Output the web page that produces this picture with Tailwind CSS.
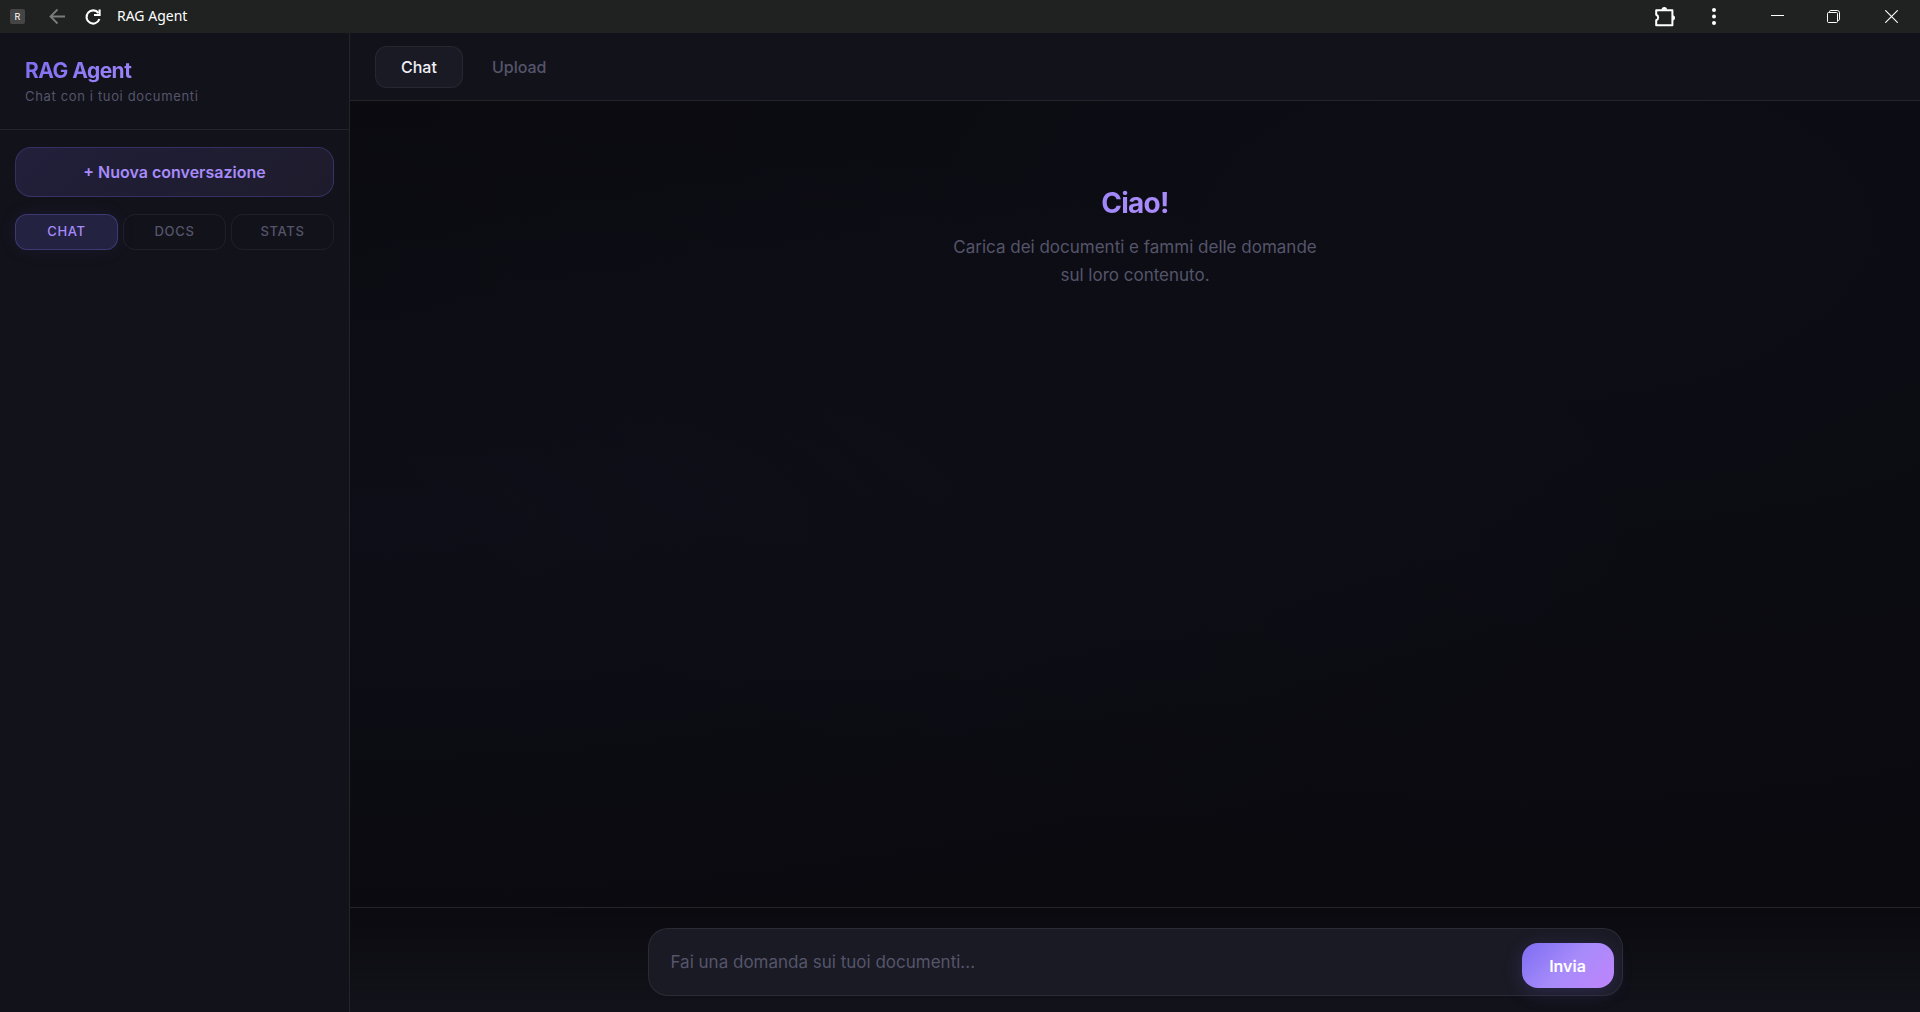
<!DOCTYPE html>
<html lang="it">
  <head>
    <meta charset="UTF-8" />
    <meta name="viewport" content="width=device-width, initial-scale=1.0" />
    <title>RAG Agent</title>
    <script src="https://cdn.jsdelivr.net/npm/@tailwindcss/browser@4"></script>
  </head>
  <body class="h-screen flex flex-col overflow-hidden bg-[#0a0a0f] font-['Inter',sans-serif] text-[#f0f0f5]">
    <!-- Barra del titolo -->
    <header class="flex shrink-0 items-center h-[33px] bg-[#202221] pl-[10px] text-white">
      <span class="flex items-center justify-center w-[15px] h-[15px] rounded-xs bg-[#454545] text-[9px] text-white">R</span>
      <button type="button" aria-label="Indietro" class="ml-6 text-[#7b7b7b]">
        <svg class="w-[17px] h-[17px]" viewBox="0 0 17 17" fill="none" stroke="currentColor" stroke-width="1.8"><path d="M16 8.5H2M8.5 1.5l-7 7 7 7" /></svg>
      </button>
      <button type="button" aria-label="Ricarica" class="ml-[18px]">
        <svg class="w-[18px] h-[18px]" viewBox="0 0 18 18" fill="none" stroke="currentColor" stroke-width="2.1"><path d="M14.4 5A6.6 6.6 0 1 0 15.4 11" /><path d="M15.6 1.4V7H10" /></svg>
      </button>
      <span class="ml-[15px] pb-px font-['Noto_Sans',sans-serif] text-sm">RAG Agent</span>
      <div class="ml-auto flex items-center">
        <button type="button" aria-label="Estensioni" class="mr-9">
          <svg class="w-[22px] h-[22px]" viewBox="0 0 22 22"><path d="M2.2 4.2H18.4V19.3H2.2v-5.1a2.9 2.9 0 0 0 0-5.5z" fill="none" stroke="currentColor" stroke-width="2" stroke-linejoin="round" /><path d="M7.6 3.8a2.7 2.7 0 0 1 5.4 0zM18.4 9.2a2.6 2.6 0 0 1 0 5.2z" fill="currentColor" /></svg>
        </button>
        <button type="button" aria-label="Menu" class="mr-[55px]">
          <svg class="w-1 h-[17px]" viewBox="0 0 4 17" fill="currentColor"><circle cx="2" cy="2" r="2" /><circle cx="2" cy="8.5" r="2" /><circle cx="2" cy="15" r="2" /></svg>
        </button>
        <button type="button" aria-label="Riduci a icona" class="mr-[43px]">
          <svg class="w-[13px] h-[13px]" viewBox="0 0 13 13"><path d="M0 5.5h13" stroke="currentColor" /></svg>
        </button>
        <button type="button" aria-label="Ripristina" class="mr-[45px]">
          <svg class="w-[13px] h-[13px]" viewBox="0 0 13 13" fill="none" stroke="currentColor"><rect x=".5" y="2.5" width="10" height="10" rx="1" /><path d="M2.5 2.5V1.8Q2.5.5 3.8.5h6.4q2.3 0 2.3 2.3v6.4q0 1.3-1.3 1.3h-.7" /></svg>
        </button>
        <button type="button" aria-label="Chiudi" class="mr-[22px]">
          <svg class="w-[13px] h-[13px]" viewBox="0 0 13 13" fill="none" stroke="currentColor" stroke-width="1.1"><path d="M.3.3l12.4 12.4M12.7.3L.3 12.7" /></svg>
        </button>
      </div>
    </header>

    <div class="flex flex-1 min-h-0 bg-[radial-gradient(ellipse_at_20%_50%,rgba(124,109,242,0.04),transparent_60%),radial-gradient(ellipse_at_80%_20%,rgba(124,109,242,0.03),transparent_60%)]">
      <!-- Sidebar -->
      <aside class="flex flex-col shrink-0 w-[350px] border-r border-white/8 bg-[#12121a]">
        <div class="px-[25px] py-[23px] border-b border-white/8">
          <h1 class="bg-[linear-gradient(135deg,#7c6df2_0%,#a78bfa_50%,#c084fc_100%)] bg-clip-text text-transparent text-[21px] leading-[30px] font-bold tracking-tight">RAG Agent</h1>
          <p class="text-[13px] leading-5 tracking-wider text-[#55556a]">Chat con i tuoi documenti</p>
        </div>
        <button type="button" class="mx-[15px] mt-[17px] h-[50px] rounded-2xl border border-[#7c6df2]/25 bg-linear-135 from-[#7c6df2]/15 to-[#a78bfa]/8 text-base font-semibold text-[#a78bfa]">+ Nuova conversazione</button>
        <nav class="mt-[17px] px-[15px] grid grid-cols-3 gap-[5px] text-[13px] font-medium tracking-wider text-[#55556a]">
          <button type="button" class="h-9 rounded-xl border border-[#7c6df2]/30 bg-[#7c6df2]/18 shadow-[0_0_20px_rgba(124,109,242,0.08)] text-[#a78bfa]">CHAT</button>
          <button type="button" class="h-9 rounded-xl border border-white/6">DOCS</button>
          <button type="button" class="h-9 rounded-xl border border-white/6">STATS</button>
        </nav>
      </aside>

      <!-- Area principale -->
      <main class="flex flex-col flex-1 min-w-0">
        <nav class="flex items-center gap-1 h-[68px] px-[25px] border-b border-white/8 bg-[#12121a] text-base font-medium">
          <button type="button" class="h-[42px] px-[25px] rounded-xl border border-white/6 bg-[#1a1a24] text-[#f0f0f5]">Chat</button>
          <button type="button" class="h-[42px] px-[25px] text-[#55556a]">Upload</button>
        </nav>

        <section class="flex-1 pt-[82px] text-center">
          <h2 class="mx-auto max-w-[400px] bg-[linear-gradient(135deg,#7c6df2_0%,#a78bfa_50%,#c084fc_100%)] bg-clip-text text-transparent text-[28px] leading-10 font-bold tracking-tight">Ciao!</h2>
          <p class="mx-auto mt-[10px] max-w-[380px] text-[17px] leading-7 text-[#55556a]">Carica dei documenti e fammi delle domande sul loro contenuto.</p>
        </section>

        <div class="px-[25px] pt-5 pb-4 border-t border-white/8 bg-linear-to-b from-transparent to-[#12121a]">
          <form class="mx-auto flex items-end max-w-[975px] h-[68px] rounded-[20px] border border-white/8 bg-[#1a1a24] pl-[22px] pr-2 pb-[7px]">
            <textarea aria-label="Messaggio" rows="1" placeholder="Fai una domanda sui tuoi documenti..." class="flex-1 h-[46px] py-2 resize-none bg-transparent text-[17px] leading-6 outline-none placeholder:text-[#55556a]"></textarea>
            <button type="submit" class="w-[92px] h-[45px] rounded-2xl bg-[linear-gradient(135deg,#7c6df2_0%,#a78bfa_50%,#c084fc_100%)] shadow-[0_4px_20px_rgba(124,109,242,0.2)] text-base font-semibold text-white">Invia</button>
          </form>
        </div>
      </main>
    </div>
  </body>
</html>
